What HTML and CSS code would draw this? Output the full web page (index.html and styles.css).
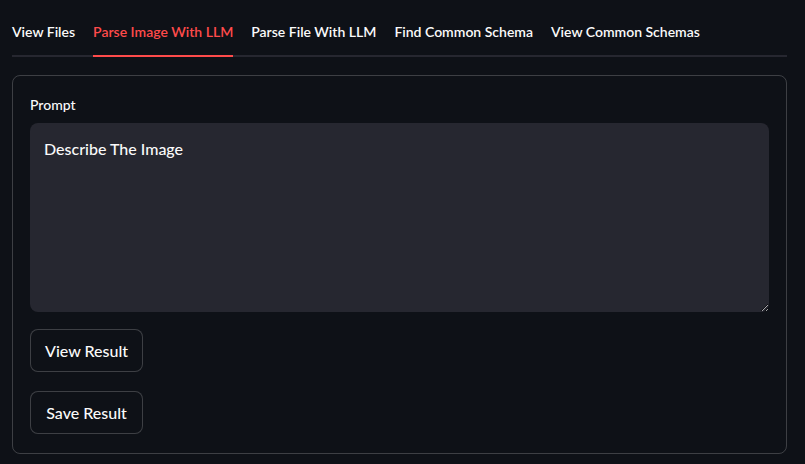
FILE: index.html
```html
<!DOCTYPE html>
<html>
<head>
<meta charset="utf-8">
<link rel="stylesheet" href="styles.css">
</head>
<body>
<div class="app">
  <div class="tabs">
    <div class="tab">View Files</div>
    <div class="tab active">Parse Image With LLM</div>
    <div class="tab">Parse File With LLM</div>
    <div class="tab">Find Common Schema</div>
    <div class="tab">View Common Schemas</div>
  </div>
  <div class="form">
    <label class="label">Prompt</label>
    <textarea class="prompt">Describe The Image</textarea>
    <button class="btn">View Result</button>
    <button class="btn">Save Result</button>
  </div>
</div>
</body>
</html>
```
FILE: styles.css
```css
* { box-sizing: border-box; }
html, body { margin: 0; padding: 0; background: #0e1117; }
body { font-family: "Lato", "Open Sans", sans-serif; color: #fafafa; }
.app { padding: 0 18px 0 12px; }
.tabs {
  display: flex;
  gap: 18px;
  height: 57px;
  align-items: stretch;
  border-bottom: 2px solid #262730;
}
.tab {
  font-size: 14px;
  font-weight: 600;
  display: flex;
  align-items: center;
  padding-top: 7px;
  border-bottom: 2px solid transparent;
  margin-bottom: -2px;
}
.tab.active { color: #ff4b4b; border-bottom-color: #ff4b4b; }
.form {
  margin-top: 18px;
  border: 1px solid rgba(250,250,250,0.2);
  border-radius: 8px;
  height: 379px;
  padding: 18px 17px 0 17px;
  display: flex;
  flex-direction: column;
  align-items: flex-start;
}
.label { font-size: 14px; font-weight: 500; line-height: 22px; margin-bottom: 7px; }
.prompt {
  width: 100%;
  height: 190px;
  background: #262730;
  border: none;
  border-radius: 8px;
  color: #fafafa;
  font-family: inherit;
  font-size: 16px;
  font-weight: 500;
  padding: 16px 14px;
  resize: vertical;
  outline: none;
  margin: 0 0 17px 0;
}
.btn {
  height: 43px;
  padding: 0 14px;
  min-width: 113px;
  background: #0e1117;
  border: 1px solid rgba(250,250,250,0.2);
  border-radius: 8px;
  color: #fafafa;
  font-family: inherit;
  font-size: 16px;
  font-weight: 500;
  margin-bottom: 19px;
}
```
